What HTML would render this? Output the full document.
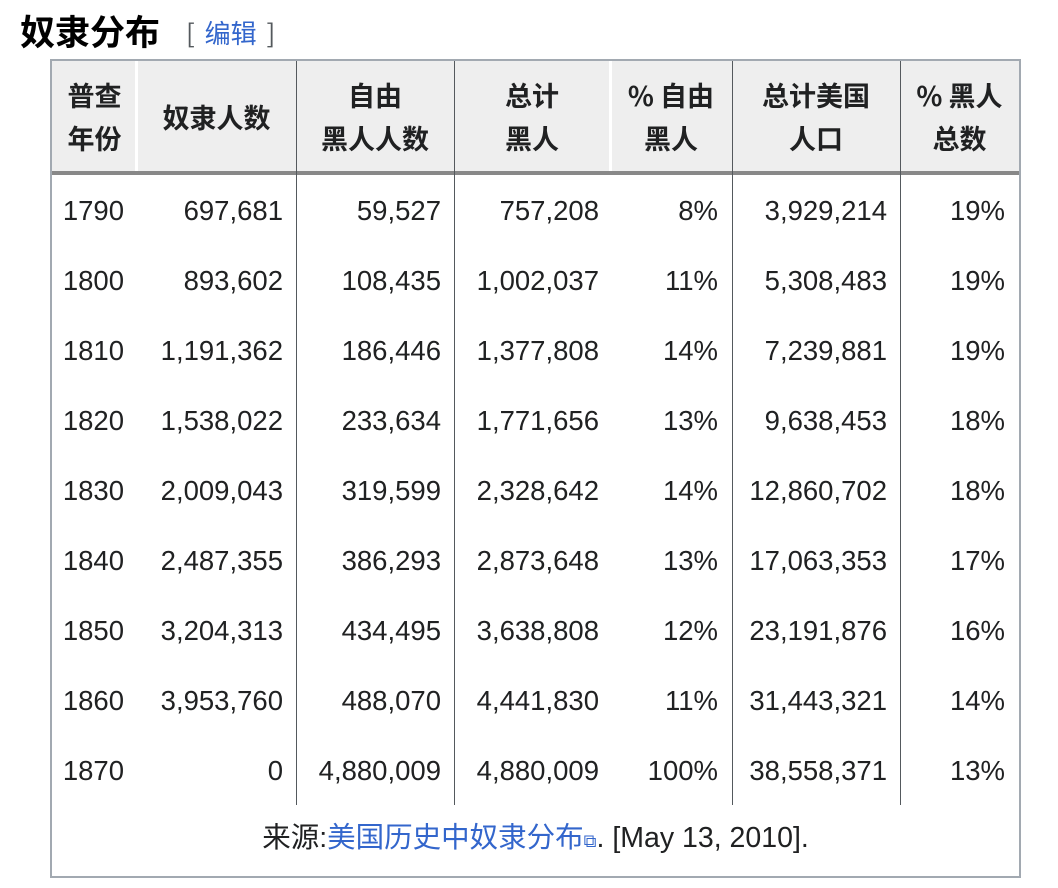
<!DOCTYPE html>
<html><head><meta charset="utf-8"><style>
body{margin:0;background:#fff;width:1058px;height:888px;position:relative;font-family:"Liberation Sans","Noto Sans CJK SC",sans-serif;color:#202122;overflow:hidden}
.t{position:absolute;left:20px;top:8px;font-size:35px;font-weight:bold;font-family:"Noto Sans CJK SC",sans-serif;color:#000;line-height:46px}
.e{position:absolute;left:186px;top:14px;font-size:26px;color:#54595d;font-family:"Noto Sans CJK SC",sans-serif;line-height:38px;word-spacing:4px}
.e a{color:#3366cc;text-decoration:none}
.box{position:absolute;left:50px;top:59px;width:967px;height:815px;border:2px solid #a2a9b1}
.hd{position:absolute;left:52px;top:61px;width:967px;height:110px;background:#eeeeee;border-bottom:4px solid #888}
.hc{position:absolute;top:61px;height:110px;display:flex;align-items:center;justify-content:center;text-align:center;font-weight:bold;font-size:27px;line-height:43px;font-family:"Noto Sans CJK SC",sans-serif;color:#202122}
.vl{position:absolute;width:1px;background:#54595d}
.wl{position:absolute;width:3px;background:#fff;top:61px;height:110px}
.c{position:absolute;font-size:27.5px;line-height:30px;text-align:right;color:#202122}
.f{position:absolute;left:52px;width:967px;top:819px;text-align:center;font-size:28.5px;line-height:38px;font-family:"Liberation Sans","Noto Sans CJK SC",sans-serif}
.f a{color:#3366cc;text-decoration:none}
</style></head><body>
<div class="t">奴隶分布</div>
<div class="e">[ <a>编辑</a> ]</div>
<div class="box"></div>
<div class="hd"></div>
<div class="wl" style="left:135px"></div>
<div class="wl" style="left:609px"></div>
<div class="hc" style="left:52px;width:85px">普查<br>年份</div>
<div class="hc" style="left:137px;width:159px">奴隶人数</div>
<div class="hc" style="left:296px;width:158px">自由<br>黑人人数</div>
<div class="hc" style="left:454px;width:156px">总计<br>黑人</div>
<div class="hc" style="left:610px;width:122px">% 自由<br>黑人</div>
<div class="hc" style="left:732px;width:168px">总计美国<br>人口</div>
<div class="hc" style="left:900px;width:119px">% 黑人<br>总数</div>
<div class="vl" style="left:296px;top:61px;height:744px"></div>
<div class="vl" style="left:454px;top:61px;height:744px"></div>
<div class="vl" style="left:732px;top:61px;height:744px"></div>
<div class="vl" style="left:900px;top:61px;height:744px"></div>
<div id="rows"></div>
<div class="f">来源:<a>美国历史中奴隶分布</a><span style="color:#3366cc;font-size:18px">⧉</span>. [May 13, 2010].</div>
<script>
var d=[["1790","697,681","59,527","757,208","8%","3,929,214","19%"],
["1800","893,602","108,435","1,002,037","11%","5,308,483","19%"],
["1810","1,191,362","186,446","1,377,808","14%","7,239,881","19%"],
["1820","1,538,022","233,634","1,771,656","13%","9,638,453","18%"],
["1830","2,009,043","319,599","2,328,642","14%","12,860,702","18%"],
["1840","2,487,355","386,293","2,873,648","13%","17,063,353","17%"],
["1850","3,204,313","434,495","3,638,808","12%","23,191,876","16%"],
["1860","3,953,760","488,070","4,441,830","11%","31,443,321","14%"],
["1870","0","4,880,009","4,880,009","100%","38,558,371","13%"]];
var R=[124,283,441,599,718,887,1005];
var h="";
d.forEach(function(r,i){r.forEach(function(v,j){h+='<div class="c" style="right:'+(1058-R[j])+'px;top:'+(196+i*70)+'px">'+v+'</div>';});});
document.getElementById("rows").innerHTML=h;
</script>
</body></html>
